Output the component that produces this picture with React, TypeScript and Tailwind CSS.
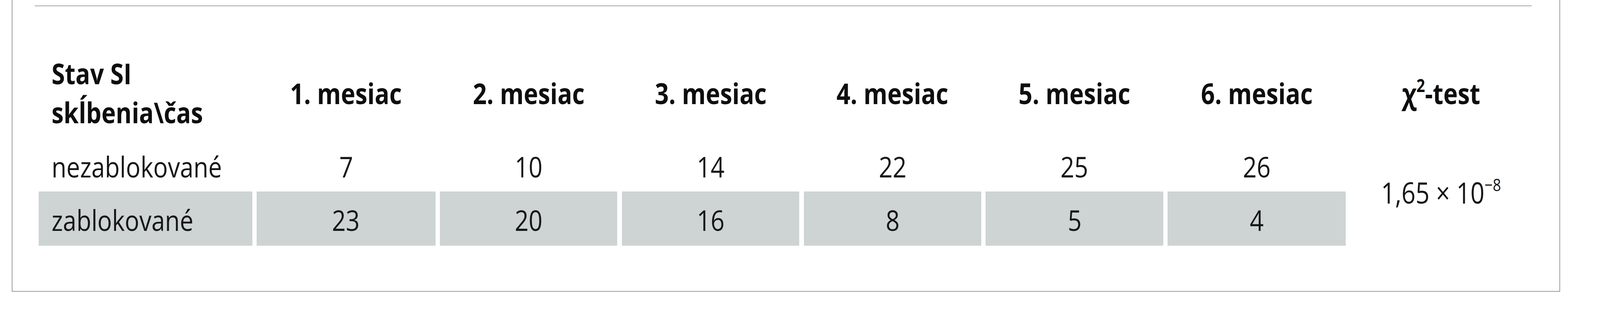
import { Fragment } from "react";

const months = ["1. mesiac", "2. mesiac", "3. mesiac", "4. mesiac", "5. mesiac", "6. mesiac"];

const rows = [
  { label: "nezablokované", values: [7, 10, 14, 22, 25, 26], shaded: false },
  { label: "zablokované", values: [23, 20, 16, 8, 5, 4], shaded: true },
];

export default function App() {
  // the table is laid out in proportions of a 4880px wide page; when the
  // window is narrower, squeeze the glyphs the same way so they keep their fit
  const squeeze = typeof window === "undefined" ? 1 : Math.min(1, window.innerWidth / 4880);
  const sx = { transform: `scaleX(${squeeze})` };

  return (
    <div className="w-full h-[800px] bg-white text-[#161616] [font-family:'Open_Sans',sans-serif]">
      {/* framed box, its top edge is cut off by the crop */}
      <div className="ml-[0.74%] mr-[2.5%] h-[748px] border-x-2 border-b-2 border-[#9d9d9d] pl-[1.39%] pr-[1.72%] pt-[14px]">
        <div className="h-[2px] bg-[#a6a6a6]" />

        <div className="mt-[104px] pl-[0.25%] grid grid-cols-[651fr_545fr_541fr_541fr_541fr_541fr_543fr_553fr] grid-rows-[236px_135px_139px] gap-x-[0.3%] text-[74px]">
          {/* header row */}
          <div className="flex items-center pl-[6%] font-bold leading-[100px] text-[#0e0e0e] whitespace-nowrap">
            <span className="inline-block origin-left" style={sx}>
              Stav SI
              <br />
              skĺbenia\čas
            </span>
          </div>
          {months.map((m) => (
            <div key={m} className="flex items-center justify-center font-bold text-[#0e0e0e] whitespace-nowrap">
              <span className="inline-block" style={sx}>
                {m}
              </span>
            </div>
          ))}
          <div className="flex items-center justify-center font-bold text-[#0e0e0e] whitespace-nowrap">
            <span className="inline-block" style={sx}>
              χ<sup className="text-[46px] top-[-31px]">2</sup>-test
            </span>
          </div>

          {/* data rows */}
          {rows.map((row, ri) => (
            <Fragment key={row.label}>
              <div className={`flex items-center pl-[6%] pt-[6px] whitespace-nowrap ${row.shaded ? "bg-[#cdd4d3]" : ""}`}>
                <span className="inline-block origin-left" style={sx}>
                  {row.label}
                </span>
              </div>
              {row.values.map((v, i) => (
                <div
                  key={i}
                  className={`flex items-center justify-center pt-[6px] ${row.shaded ? "bg-[#cdd4d3]" : ""}`}
                >
                  <span className="inline-block" style={sx}>
                    {v}
                  </span>
                </div>
              ))}
              {ri === 0 && (
                <div className="row-span-2 flex items-center justify-center text-[75px] whitespace-nowrap">
                  <span className="inline-block" style={sx}>
                    1,65 × 10<sup className="text-[44px] top-[-32px]">−8</sup>
                  </span>
                </div>
              )}
            </Fragment>
          ))}
        </div>
      </div>
    </div>
  );
}
